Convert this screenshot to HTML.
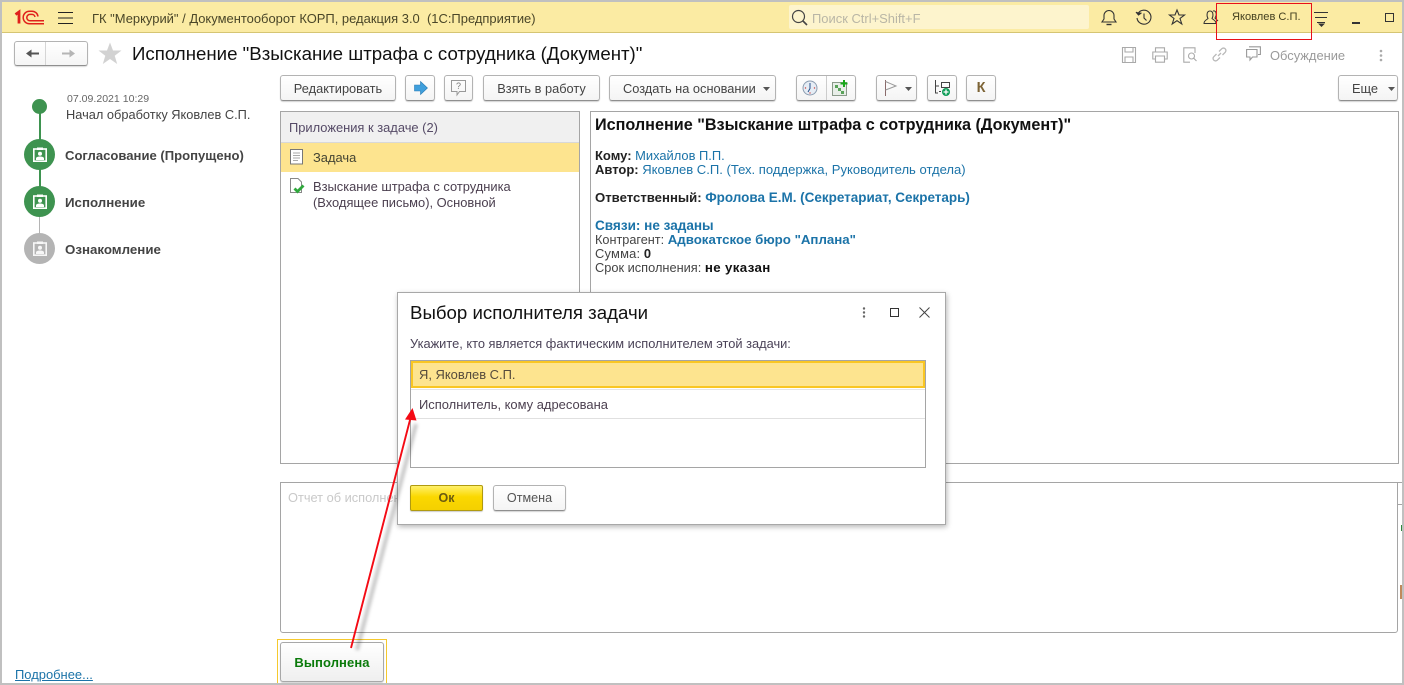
<!DOCTYPE html>
<html lang="ru"><head><meta charset="utf-8"><title>Исполнение</title>
<style>
html,body{margin:0;padding:0;background:#fff}
#r{position:relative;width:1404px;height:685px;overflow:hidden;background:#fff;font-family:"Liberation Sans","Noto Sans CJK SC",sans-serif;font-size:12px;color:#333}
#r *{box-sizing:border-box}
.a{position:absolute;white-space:nowrap}
.b{position:absolute;border:1px solid #b3b3b3;border-bottom-color:#8f8f8f;border-radius:3px;background:linear-gradient(#fff,#f4f4f4);box-shadow:0 1px 1px rgba(0,0,0,.18);text-align:center;color:#444;font-size:12.8px;line-height:25px;white-space:nowrap}
.l{color:#1b73a8}
svg{position:absolute;overflow:visible}
</style></head><body><div id="r">

<!-- header -->
<div class="a" style="left:0;top:0;width:1404px;height:33px;background:#fbeba3;border-bottom:1px solid #d5c573"></div>
<svg style="left:14px;top:10px" width="31" height="15" viewBox="0 0 31 15"><g fill="none" stroke="#e0201b"><path d="M1.500 4.500L5 2V13.500" stroke-width="2.800"/><path d="M30 13.800H15.500A6 6 0 0 1 15.500 1.200H18A6 6 0 0 1 24 6.500" stroke-width="1.500"/><path d="M30 10.800H16A3.200 3.200 0 0 1 16 4.400H18A3 3 0 0 1 21 7" stroke-width="1.500"/></g></svg>
<svg style="left:58px;top:12px" width="15" height="12" shape-rendering="crispEdges"><path d="M0 .5H15M0 6H15M0 11.500H15" stroke="#222" stroke-width="1"/></svg>
<div class="a" style="left:92px;top:11px;font-size:12.960px;color:#4a4628">ГК "Меркурий" / Документооборот КОРП, редакция 3.0&nbsp; (1С:Предприятие)</div>
<div class="a" style="left:789px;top:5px;width:300px;height:24px;background:#fdf4cd;border-radius:2px"></div>
<svg style="left:791px;top:9px" width="18" height="18" fill="none" stroke="#444" stroke-width="1.200"><circle cx="7.500" cy="7.500" r="6"/><path d="M12 12L16 16" stroke-width="1.600"/></svg>
<div class="a" style="left:812px;top:11px;font-size:12.950px;color:#b9b6a6">Поиск Ctrl+Shift+F</div>
<svg style="left:1101px;top:9px" width="16" height="17" fill="none" stroke="#333" stroke-width="1.100"><path d="M1 13H15L13 10V6.500A5 5 0 0 0 3 6.500V10Z"/><path d="M5.500 15.500H10.500" stroke-width="1.400"/><path d="M8 1V2"/></svg>
<svg style="left:1135px;top:9px" width="18" height="17" fill="none" stroke="#333" stroke-width="1.100"><path d="M3 4.500A7 7 0 1 1 2 9"/><path d="M1 3L3.500 6L6.500 3.800" fill="#333"/><path d="M9 4.500V9L11.500 11.500"/></svg>
<svg style="left:1169px;top:9px" width="17" height="16" fill="none" stroke="#333" stroke-width="1.100"><path d="M8 1L10 6H15.500L11 9.500L12.800 15L8 11.700L3.200 15L5 9.500L.5 6H6Z"/></svg>
<svg style="left:1203px;top:9px" width="16" height="16" fill="none" stroke="#333" stroke-width="1"><path d="M1 14.500C1 11.500 3.500 11 5 9.500C3.500 7 3.500 2 7 2C10.500 2 10.500 7 9 9.500C10.500 11 13 11.500 13 14.500Z"/><path d="M10 2C13.500 1 14 6 12 9L15 12"/></svg>
<div class="a" style="left:1232px;top:11px;font-size:11.100px;color:#444020">Яковлев С.П.</div>
<div class="a" style="left:1216px;top:3px;width:96px;height:37px;border:1px solid #e8101a"></div>
<svg style="left:1314px;top:12px" width="15" height="15" shape-rendering="crispEdges"><path d="M0 .5H14M1 5.500H13M3 10.500H11" stroke="#333"/><path d="M4 11.500H11L7.500 15Z" fill="#333" shape-rendering="auto"/></svg>
<div class="a" style="left:1352px;top:22px;width:8px;height:1.500px;background:#333"></div>
<div class="a" style="left:1385px;top:13px;width:9px;height:9px;border:1.200px solid #333"></div>

<!-- title row -->
<div class="a" style="left:14px;top:41px;width:74px;height:25px;border:1px solid #b3b3b3;border-bottom-color:#8f8f8f;border-radius:3px;background:linear-gradient(#fff,#f5f5f5);box-shadow:0 1px 1px rgba(0,0,0,.15)"></div>
<div class="a" style="left:45px;top:42px;width:1px;height:23px;background:#d5d5d5"></div>
<svg style="left:26px;top:48px" width="14" height="11"><path d="M0 5.500L5.500 1.500V4.500H13V6.500H5.500V9.500Z" fill="#555"/></svg>
<svg style="left:62px;top:48px" width="14" height="11"><path d="M13 5.500L7.500 1.500V4.500H0V6.500H7.500V9.500Z" fill="#b5b5b5"/></svg>
<svg style="left:98px;top:42px" width="24" height="23"><path d="M12 .5L15 8.500H23.500L16.700 13.800L19.200 22L12 17L4.800 22L7.300 13.800L.5 8.500H9Z" fill="#d2d2d2"/></svg>
<div class="a" style="left:132px;top:43px;font-size:18.660px;color:#111">Исполнение "Взыскание штрафа с сотрудника (Документ)"</div>

<svg style="left:1122px;top:47px" width="14" height="16" fill="none" stroke="#aaa" stroke-width="1.100"><path d="M.5 .5H13.500V15.500H.5Z"/><path d="M3 .5V5H11V.5M3 15.500V10H11V15.500"/></svg>
<svg style="left:1152px;top:47px" width="16" height="16" fill="none" stroke="#aaa" stroke-width="1.100"><path d="M3.500 5V.8H12.500V5M3.500 12H.8V5H15.200V12H12.500"/><path d="M3.500 9H12.500V15.200H3.500Z"/></svg>
<svg style="left:1183px;top:47px" width="15" height="16" fill="none" stroke="#aaa" stroke-width="1.100"><path d="M7 15.200H.8V.8H12V6"/><circle cx="8.500" cy="9" r="3"/><path d="M10.700 11.200L13.500 14"/></svg>
<svg style="left:1212px;top:47px" width="15" height="15" fill="none" stroke="#b8b8b8" stroke-width="1.300"><path d="M6 9L9 6M4.500 7L1.800 9.700A2.400 2.400 0 0 0 5.300 13.200L8 10.500M7 4.500L9.700 1.800A2.400 2.400 0 0 1 13.200 5.300L10.500 8"/></svg>
<svg style="left:1246px;top:46px" width="15" height="16" fill="none" stroke="#999" stroke-width="1.100"><path d="M.6 3.500H11V11H6.500L4 14V11H.6Z"/><path d="M3 .8H14.400V8.500H12"/></svg>
<div class="a" style="left:1270px;top:48px;font-size:12.900px;color:#9a9a9a">Обсуждение</div>
<svg style="left:1379px;top:49px" width="4" height="13" fill="#aaa"><circle cx="2" cy="2" r="1.300"/><circle cx="2" cy="6.500" r="1.300"/><circle cx="2" cy="11" r="1.300"/></svg>

<!-- toolbar -->
<div class="b" style="left:280px;top:75px;width:116px;height:26px">Редактировать</div>
<div class="b" style="left:405px;top:75px;width:30px;height:26px"></div>
<svg style="left:414px;top:81px" width="14" height="14"><path d="M.5 4H6.500V.5L13.500 7L6.500 13.500V10H.5Z" fill="#3f9fdc" stroke="#2a7db5" stroke-width=".6"/></svg>
<div class="b" style="left:444px;top:75px;width:29px;height:26px"></div>
<svg style="left:451px;top:80px" width="15" height="16" fill="none" stroke="#999"><path d="M.5 .5H14.500V11.500H8.500L6 15V11.500H.5Z"/></svg>
<div class="a" style="left:456px;top:81px;font-size:9px;color:#777">?</div>
<div class="b" style="left:483px;top:75px;width:117px;height:26px">Взять в работу</div>
<div class="b" style="left:609px;top:75px;width:167px;height:26px;text-align:left;padding-left:13px">Создать на основании</div>
<svg style="left:763px;top:87px" width="7" height="4"><path d="M0 0H7L3.500 4Z" fill="#555"/></svg>
<div class="b" style="left:796px;top:75px;width:60px;height:26px"></div>
<div class="a" style="left:826px;top:76px;width:1px;height:24px;background:#ccc"></div>
<svg style="left:802px;top:80px" width="16" height="16"><circle cx="8" cy="8" r="7" fill="#e6edf5" stroke="#8b9cb0"/><path d="M8 3V8.500L6 12" stroke="#27508a" fill="none" stroke-width="1"/><circle cx="3.500" cy="8" r=".7" fill="#c44"/><circle cx="12.500" cy="8" r=".7" fill="#c44"/><circle cx="8" cy="13" r=".7" fill="#c44"/></svg>
<svg style="left:832px;top:80px" width="16" height="16"><rect x=".5" y="2.500" width="14" height="13" fill="#e8eee8" stroke="#8a9a8a"/><path d="M3 5h3v3H3zM6 8h3v3H6zM9 11h3v3H9z" fill="#5aa35a"/><path d="M12 0V7M8.500 3.500H15.500" stroke="#18a818" stroke-width="2"/></svg>
<div class="b" style="left:876px;top:75px;width:41px;height:26px"></div>
<svg style="left:884px;top:80px" width="15" height="16" fill="none" stroke="#8a6a6a"><path d="M1.500 0V16"/><path d="M1.500 1.500L12 6L1.500 10" stroke="#999"/></svg>
<svg style="left:905px;top:87px" width="7" height="4"><path d="M0 0H7L3.500 4Z" fill="#555"/></svg>
<div class="b" style="left:927px;top:75px;width:30px;height:26px"></div>
<svg style="left:934px;top:80px" width="17" height="17" fill="none" stroke="#444"><path d="M1.500 0V13H4M1.500 6H5"/><rect x="7.500" y="2.500" width="8" height="5"/><path d="M5 11.500H7"/><circle cx="12" cy="12" r="4" fill="#0f9d58" stroke="none"/><path d="M12 9.500V14.500M9.500 12H14.500" stroke="#fff" stroke-width="1.300"/></svg>
<div class="b" style="left:966px;top:75px;width:30px;height:26px;color:#7d6436;font-weight:bold;font-size:14.500px">К</div>
<div class="b" style="left:1338px;top:75px;width:60px;height:26px;text-align:left;padding-left:13px">Еще</div>
<svg style="left:1388px;top:87px" width="7" height="4"><path d="M0 0H7L3.500 4Z" fill="#555"/></svg>

<!-- route -->
<div class="a" style="left:39px;top:106px;width:1.500px;height:95px;background:#3e9350"></div>
<div class="a" style="left:39px;top:201px;width:1.200px;height:48px;background:#b4b4b4"></div>
<div class="a" style="left:32px;top:99px;width:15px;height:15px;border-radius:50%;background:#3e9350"></div>
<div class="a" style="left:67px;top:93px;font-size:10.550px;color:#666">07.09.2021 10:29</div>
<div class="a" style="left:66px;top:107px;font-size:12.800px;color:#444">Начал обработку Яковлев С.П.</div>
<div class="a" style="left:24px;top:139px;width:31px;height:31px;border-radius:50%;background:#3e9350"></div>
<div class="a" style="left:24px;top:186px;width:31px;height:31px;border-radius:50%;background:#3e9350"></div>
<div class="a" style="left:24px;top:233px;width:31px;height:31px;border-radius:50%;background:#b4b4b4"></div>
<svg style="left:33px;top:147px" width="14" height="15"><use href="#u"/></svg>
<svg style="left:33px;top:194px" width="14" height="15"><use href="#u"/></svg>
<svg style="left:33px;top:241px" width="14" height="15"><defs><g id="u"><rect x=".8" y="2" width="12.400" height="12.200" fill="none" stroke="#fff" stroke-width="1.600"/><rect x="4" y=".5" width="6" height="2.500" fill="#fff"/><circle cx="7" cy="6.800" r="2" fill="#fff"/><path d="M3 13V11.500C3 10 5 9.500 7 9.500S11 10 11 11.500V13Z" fill="#fff"/></g></defs><use href="#u" opacity=".9"/></svg>
<div class="a" style="left:65px;top:148px;font-size:13.080px;font-weight:bold;color:#444">Согласование (Пропущено)</div>
<div class="a" style="left:65px;top:195px;font-size:13.300px;font-weight:bold;color:#444">Исполнение</div>
<div class="a" style="left:65px;top:242px;font-size:13.300px;font-weight:bold;color:#444">Ознакомление</div>
<div class="a" style="left:15px;top:667px;font-size:12.950px;color:#1b73a8;text-decoration:underline">Подробнее...</div>

<!-- attachments -->
<div class="a" style="left:280px;top:111px;width:300px;height:353px;border:1px solid #a5a5a5;background:#fff"></div>
<div class="a" style="left:281px;top:112px;width:298px;height:31px;background:#f0f0f0;border-bottom:1px solid #d8d8d8"></div>
<div class="a" style="left:289px;top:120px;font-size:12.900px;color:#554a66">Приложения к задаче (2)</div>
<div class="a" style="left:281px;top:143px;width:298px;height:29px;background:#fde48f"></div>
<svg style="left:290px;top:149px" width="13" height="16" fill="#fff" stroke="#777"><rect x=".5" y=".5" width="12" height="14.500"/><path d="M3 4H10M3 6.500H10M3 9H10M3 11.500H8" stroke="#aaa"/></svg>
<div class="a" style="left:313px;top:150px;font-size:12.900px;color:#443">Задача</div>
<svg style="left:290px;top:178px" width="15" height="16" fill="#fff" stroke="#888"><path d="M.5 .5H8L11.500 4V14.500H.5Z"/><path d="M4.500 10.500L7.500 13.500L13.500 7.500" stroke="#2fa83c" stroke-width="2.800" fill="none"/></svg>
<div class="a" style="left:313px;top:179px;font-size:12.900px;line-height:16px;color:#4c4050">Взыскание штрафа с сотрудника<br>(Входящее письмо), Основной</div>

<!-- html panel -->
<div class="a" style="left:590px;top:111px;width:809px;height:353px;border:1px solid #a5a5a5;background:#fff"></div>
<div class="a" style="left:595px;top:115px;font-size:16.200px;line-height:20px;font-weight:bold;color:#111">Исполнение "Взыскание штрафа с сотрудника (Документ)"</div>
<div class="a" style="left:595px;top:149px;font-size:12.900px;line-height:14px;color:#444">
<b style="color:#222;font-size:13px">Кому:</b> <span class="l">Михайлов П.П.</span><br>
<b style="color:#222;font-size:13px">Автор:</b> <span class="l" style="font-size:13.060px">Яковлев С.П. (Тех. поддержка, Руководитель отдела)</span><br>
<br>
<b style="color:#222;font-size:13.170px">Ответственный:</b> <b class="l" style="font-size:13.470px">Фролова Е.М. (Секретариат, Секретарь)</b><br>
<br>
<b class="l" style="font-size:13.550px">Связи: не заданы</b><br>
<span style="font-size:12.700px">Контрагент:</span> <b class="l" style="font-size:13.280px">Адвокатское бюро "Аплана"</b><br>
<span style="letter-spacing:.2px">Сумма:</span> <b style="color:#222">0</b><br>
<span style="font-size:12.800px">Срок исполнения:</span> <b style="color:#111;font-size:13.300px;letter-spacing:.35px">не указан</b>
</div>

<!-- report -->
<div class="a" style="left:280px;top:482px;width:1118px;height:151px;border:1px solid #a5a5a5;border-radius:0 0 3px 3px;background:#fff"></div>
<div class="a" style="left:288px;top:490px;font-size:12.800px;color:#c9c9c9">Отчет об исполнении</div>
<div class="a" style="left:1398px;top:504px;width:4px;height:1px;background:#a5a5a5"></div>
<div class="a" style="left:1398px;top:482px;width:4px;height:1px;background:#a5a5a5"></div>
<div class="a" style="left:1401px;top:525px;width:1px;height:6px;background:#2f8a3c"></div>
<div class="a" style="left:1400px;top:585px;width:2px;height:14px;background:#c08a5c"></div>

<!-- done button -->
<div class="a" style="left:277px;top:639px;width:110px;height:46px;border:1px solid #f5c92e;border-bottom:none"></div>
<div class="b" style="left:280px;top:642px;width:104px;height:40px;line-height:39px;font-weight:bold;font-size:13px;color:#0a7a0a;border-color:#a8a8a8;background:linear-gradient(#fff,#efefef);letter-spacing:.1px">Выполнена</div>

<!-- dialog -->
<div class="a" style="left:397px;top:292px;width:549px;height:233px;background:#fff;border:1px solid #a8a8a8;box-shadow:1px 2px 5px rgba(0,0,0,.28)"></div>
<div class="a" style="left:410px;top:302px;font-size:18.660px;color:#111">Выбор исполнителя задачи</div>
<svg style="left:862px;top:307px" width="4" height="12" fill="#666"><circle cx="2" cy="1.500" r="1.200"/><circle cx="2" cy="5.500" r="1.200"/><circle cx="2" cy="9.500" r="1.200"/></svg>
<div class="a" style="left:890px;top:308px;width:9px;height:9px;border:1.200px solid #333"></div>
<svg style="left:919px;top:307px" width="11" height="11"><path d="M.5 .5L10.500 10.500M10.500 .5L.5 10.500" stroke="#444" stroke-width="1"/></svg>
<div class="a" style="left:410px;top:336px;font-size:12.840px;color:#4b4358">Укажите, кто является фактическим исполнителем этой задачи:</div>
<div class="a" style="left:410px;top:360px;width:516px;height:108px;border:1px solid #a5a5a5;background:#fff"></div>
<div class="a" style="left:411px;top:361px;width:514px;height:27px;background:#fde48f;border:2px solid #f9c623"></div>
<div class="a" style="left:419px;top:367px;font-size:12.940px;color:#554b3c">Я, Яковлев С.П.</div>
<div class="a" style="left:411px;top:389px;width:514px;height:1px;background:#e5e5e5"></div>
<div class="a" style="left:419px;top:397px;font-size:12.950px;color:#4c4050">Исполнитель, кому адресована</div>
<div class="a" style="left:411px;top:418px;width:514px;height:1px;background:#e0e0e0"></div>
<div class="a" style="left:410px;top:485px;width:73px;height:26px;border:1px solid #b09a10;border-radius:2px;background:linear-gradient(#fff06a,#fbd800 45%,#f4d000);box-shadow:0 1px 1px rgba(0,0,0,.2);text-align:center;line-height:25px;font-weight:bold;font-size:12.500px;color:#6a5a10">Ок</div>
<div class="b" style="left:493px;top:485px;width:73px;height:26px;line-height:25px;font-size:12.600px;color:#555">Отмена</div>

<!-- arrow -->
<svg style="left:340px;top:400px;filter:blur(1.500px)" width="90" height="260" viewBox="340 400 90 260">
<path d="M357 650L416 424" stroke="#000" stroke-opacity=".22" stroke-width="4" fill="none"/>
</svg>
<svg style="left:340px;top:400px" width="90" height="260" viewBox="340 400 90 260">
<path d="M351 648L410.500 418" stroke="#f40a14" stroke-width="1.900" fill="none"/>
<path d="M412.500 408L405 419.500L416.500 420.500Z" fill="#f40a14"/>
</svg>

<!-- frame -->
<div class="a" style="left:0;top:0;width:1404px;height:2px;background:#c0c0c0"></div>
<div class="a" style="left:0;top:0;width:2px;height:685px;background:#c0c0c0"></div>
<div class="a" style="left:1402px;top:0;width:2px;height:685px;background:#c0c0c0"></div>
<div class="a" style="left:0;top:683px;width:1404px;height:2px;background:#c0c0c0"></div>
</div></body></html>
